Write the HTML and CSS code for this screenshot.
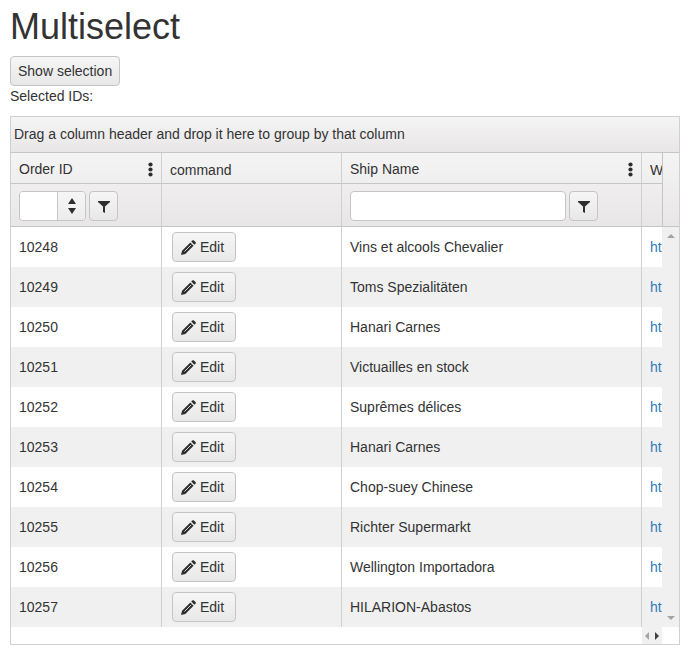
FILE: index.html
```html
<!DOCTYPE html>
<html lang="en">
<head>
<meta charset="utf-8">
<title>Multiselect</title>
<link rel="stylesheet" href="styles.css">
</head>
<body>
<svg class="defs" aria-hidden="true">
  <symbol id="pencil" viewBox="0 0 14 14"><path fill="#2e2e2e" d="M0 14l1-4L8.700 2.300l3 3L4 13zM9.500 1.500l1-1q.8-.7 1.600 0l1.400 1.400q.7.800 0 1.600l-1 1z"/><path fill="none" stroke="#f2f2f2" stroke-width=".8" d="M3.200 10.800l6.300-6.300"/></symbol>
  <symbol id="funnel" viewBox="0 0 12 12"><path fill="#2e2e2e" d="M0 0h12v1L7 5.500V12L5 11V5.500L0 1z"/></symbol>
  <symbol id="dots" viewBox="0 0 5 15"><circle cx="2.500" cy="2.500" r="2.100"/><circle cx="2.500" cy="7.500" r="2.100"/><circle cx="2.500" cy="12.500" r="2.100"/></symbol>
</svg>
<h1>Multiselect</h1>
<button class="button" type="button">Show selection</button>
<div class="selected">Selected IDs:</div>
<section class="grid">
  <div class="grouping">Drag a column header and drop it here to group by that column</div>
  <div class="header">
    <div class="header-wrap">
      <table>
        <colgroup><col class="c-id"><col class="c-command"><col class="c-name"><col class="c-link"></colgroup>
        <thead>
          <tr class="titles">
            <th><div class="title">Order ID<button class="menu" type="button" aria-label="Order ID column menu"><svg><use href="#dots"/></svg></button></div></th>
            <th><div class="title plain">command</div></th>
            <th><div class="title">Ship Name<button class="menu" type="button" aria-label="Ship Name column menu"><svg><use href="#dots"/></svg></button></div></th>
            <th><div class="title plain">W</div></th>
          </tr>
          <tr class="filters">
            <td><div class="filter">
              <span class="numeric"><input type="text" aria-label="Filter Order ID"><button class="spin" type="button" aria-label="Change value"><svg viewBox="0 0 8 16"><path d="M4 0l4 6H0zM4 16l4-6H0z"/></svg></button></span>
              <button class="button square" type="button" aria-label="Order ID filter"><svg><use href="#funnel"/></svg></button>
            </div></td>
            <td></td>
            <td><div class="filter">
              <input class="textbox" type="text" aria-label="Filter Ship Name">
              <button class="button square" type="button" aria-label="Ship Name filter"><svg><use href="#funnel"/></svg></button>
            </div></td>
            <td></td>
          </tr>
        </thead>
      </table>
    </div>
  </div>
  <div class="content">
    <div class="rows">
      <table>
        <colgroup><col class="c-id"><col class="c-command"><col class="c-name"><col class="c-link"></colgroup>
        <tbody>
          <tr><td>10248</td><td><button class="button edit" type="button"><svg><use href="#pencil"/></svg>Edit</button></td><td>Vins et alcools Chevalier</td><td><a href="#">ht</a></td></tr>
          <tr><td>10249</td><td><button class="button edit" type="button"><svg><use href="#pencil"/></svg>Edit</button></td><td>Toms Spezialitäten</td><td><a href="#">ht</a></td></tr>
          <tr><td>10250</td><td><button class="button edit" type="button"><svg><use href="#pencil"/></svg>Edit</button></td><td>Hanari Carnes</td><td><a href="#">ht</a></td></tr>
          <tr><td>10251</td><td><button class="button edit" type="button"><svg><use href="#pencil"/></svg>Edit</button></td><td>Victuailles en stock</td><td><a href="#">ht</a></td></tr>
          <tr><td>10252</td><td><button class="button edit" type="button"><svg><use href="#pencil"/></svg>Edit</button></td><td>Suprêmes délices</td><td><a href="#">ht</a></td></tr>
          <tr><td>10253</td><td><button class="button edit" type="button"><svg><use href="#pencil"/></svg>Edit</button></td><td>Hanari Carnes</td><td><a href="#">ht</a></td></tr>
          <tr><td>10254</td><td><button class="button edit" type="button"><svg><use href="#pencil"/></svg>Edit</button></td><td>Chop-suey Chinese</td><td><a href="#">ht</a></td></tr>
          <tr><td>10255</td><td><button class="button edit" type="button"><svg><use href="#pencil"/></svg>Edit</button></td><td>Richter Supermarkt</td><td><a href="#">ht</a></td></tr>
          <tr><td>10256</td><td><button class="button edit" type="button"><svg><use href="#pencil"/></svg>Edit</button></td><td>Wellington Importadora</td><td><a href="#">ht</a></td></tr>
          <tr><td>10257</td><td><button class="button edit" type="button"><svg><use href="#pencil"/></svg>Edit</button></td><td>HILARION-Abastos</td><td><a href="#">ht</a></td></tr>
        </tbody>
      </table>
    </div>
    <div class="scroll-y" aria-hidden="true">
      <svg viewBox="0 0 8 4"><path d="M4 0l4 4H0z"/></svg>
      <svg viewBox="0 0 8 4"><path d="M4 4l4-4H0z"/></svg>
    </div>
  </div>
  <div class="scroll-x" aria-hidden="true">
    <div class="scroll-buttons">
      <svg viewBox="0 0 4 8"><path d="M0 4l4-4v8z"/></svg>
      <svg class="active" viewBox="0 0 4 8"><path d="M4 4L0 0v8z"/></svg>
    </div>
  </div>
</section>
</body>
</html>
```

FILE: styles.css
```css
* { box-sizing: border-box; }

body {
  margin: 0 17px 0 10px;
  background: #fff;
  color: #333;
  font: 14px/20px "Liberation Sans", Arial, sans-serif;
}

button, input { font: inherit; color: inherit; }
svg { display: block; }
.defs { position: absolute; width: 0; height: 0; }

h1 {
  margin: 0;
  padding: 7px 0 9px;
  font-size: 36px;
  font-weight: 400;
  line-height: 40px;
}

.button {
  display: inline-flex;
  align-items: center;
  justify-content: center;
  height: 30px;
  padding: 0 7px;
  border: 1px solid #c5c5c5;
  border-radius: 4px;
  background: linear-gradient(#f6f6f6, #e8e8e8);
}

body > .button { display: flex; }
.selected { margin-bottom: 10px; }

.grid { border: 1px solid #d0d0d0; }

.grouping {
  height: 36px;
  padding: 7px 3px 8px;
  border-bottom: 1px solid #c5c5c5;
  background: linear-gradient(#f5f4f5, #e8e6e7);
}

.header {
  padding-right: 16px;
  border-bottom: 1px solid #c5c5c5;
  background: linear-gradient(#f5f4f5, #e8e6e7);
}

.header-wrap {
  overflow: hidden;
  border-right: 1px solid #c5c5c5;
}

table {
  width: 830px;
  table-layout: fixed;
  border-collapse: separate;
  border-spacing: 0;
}

.c-id { width: 150px; }
.c-command { width: 180px; }
.c-name { width: 300px; }
.c-link { width: 200px; }

th, td {
  padding: 0 8px;
  border-left: 1px solid #d0d0d0;
  font-weight: 400;
  text-align: left;
}

th:first-child, td:first-child { border-left: 0; }

.titles th {
  height: 31px;
  border-bottom: 1px solid #c5c5c5;
}

.title {
  display: flex;
  align-items: center;
  justify-content: space-between;
  height: 30px;
  padding-top: 2px;
}

.plain { padding-top: 4px; }

.menu {
  padding: 0;
  border: 0;
  background: none;
}

.menu svg { width: 5px; height: 15px; fill: #2e2e2e; }

.filters td { height: 42px; padding-top: 1px; }
.filter { display: flex; gap: 3px; }

.numeric {
  display: flex;
  width: 67px;
  height: 30px;
  overflow: hidden;
  border: 1px solid #c5c5c5;
  border-radius: 4px;
}

.numeric input {
  flex: 1;
  min-width: 0;
  padding: 0 6px;
  border: 0;
  background: #fff;
}

.spin {
  display: flex;
  align-items: center;
  justify-content: center;
  width: 28px;
  padding: 0;
  border: 0;
  border-left: 1px solid #c5c5c5;
  background: linear-gradient(#f6f6f6, #ececec);
}

.spin svg { width: 8px; height: 16px; fill: #2e2e2e; }

.square { width: 29px; padding: 2px 0 0; }
.square svg { width: 12px; height: 12px; }

.textbox {
  width: 216px;
  height: 30px;
  padding: 0 6px;
  border: 1px solid #c5c5c5;
  border-radius: 4px;
  background: #fff;
}

.content { display: flex; }
.rows { flex: 1; min-width: 0; overflow: hidden; }
.rows td { height: 40px; }
.rows td:nth-child(2) { padding-left: 10px; }
.rows tr:nth-child(even) { background: #f0f0f0; }

.edit { display: flex; gap: 4px; width: 64px; padding: 0 8px; justify-content: flex-start; }
.edit svg { width: 15px; height: 15px; }

a { color: #337ab7; text-decoration: none; }

.scroll-y {
  display: flex;
  flex-direction: column;
  align-items: center;
  justify-content: space-between;
  width: 17px;
  padding: 7px 0;
  background: #f0f0f0;
}

.scroll-y svg { width: 8px; height: 4px; fill: #a3a3a3; }

.scroll-x { padding-right: 17px; }

.scroll-buttons {
  display: flex;
  align-items: center;
  justify-content: space-between;
  width: 20px;
  height: 17px;
  margin-left: auto;
  padding: 0 3px;
  background: #f0f0f0;
}

.scroll-buttons svg { width: 4px; height: 8px; fill: #a3a3a3; }
.scroll-buttons .active { fill: #404040; }
```
